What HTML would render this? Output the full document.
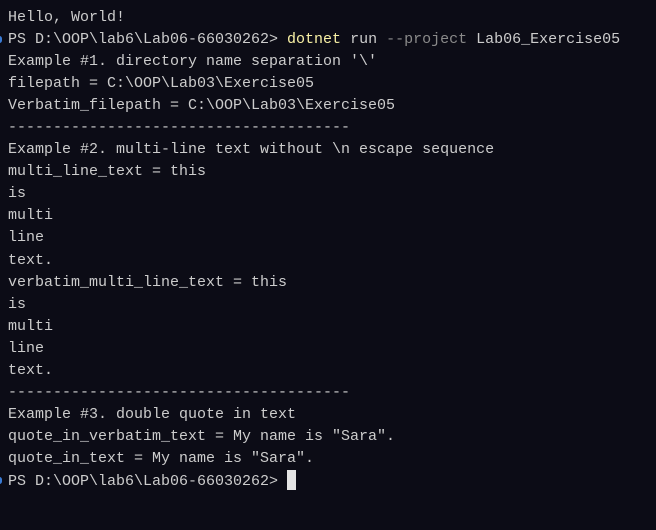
<!DOCTYPE html>
<html><head><style>
html,body{margin:0;padding:0;background:#0c0c16;width:656px;height:530px;overflow:hidden}
pre{margin:0;position:absolute;left:8px;top:7px;font-family:"Liberation Mono",monospace;font-size:15px;line-height:22.05px;color:#cccccc}
.y{color:#f9f1a5}.g{color:#8a8a8a}
.cur{display:inline-block;width:9px;height:20px;background:#e5e5e5;vertical-align:-5px}
.dot{position:absolute;left:-3px;width:5px;height:7px;border-radius:3px;background:#3a7bd5}
</style></head><body>
<div class="dot" style="top:36px"></div>
<div class="dot" style="top:477px"></div>
<pre>Hello, World!
PS D:\OOP\lab6\Lab06-66030262&gt; <span class="y">dotnet</span> run <span class="g">--project</span> Lab06_Exercise05
Example #1. directory name separation '\'
filepath = C:\OOP\Lab03\Exercise05
Verbatim_filepath = C:\OOP\Lab03\Exercise05
--------------------------------------
Example #2. multi-line text without \n escape sequence
multi_line_text = this
is
multi
line
text.
verbatim_multi_line_text = this
is
multi
line
text.
--------------------------------------
Example #3. double quote in text
quote_in_verbatim_text = My name is "Sara".
quote_in_text = My name is "Sara".
PS D:\OOP\lab6\Lab06-66030262&gt; <span class="cur"></span></pre>
</body></html>
